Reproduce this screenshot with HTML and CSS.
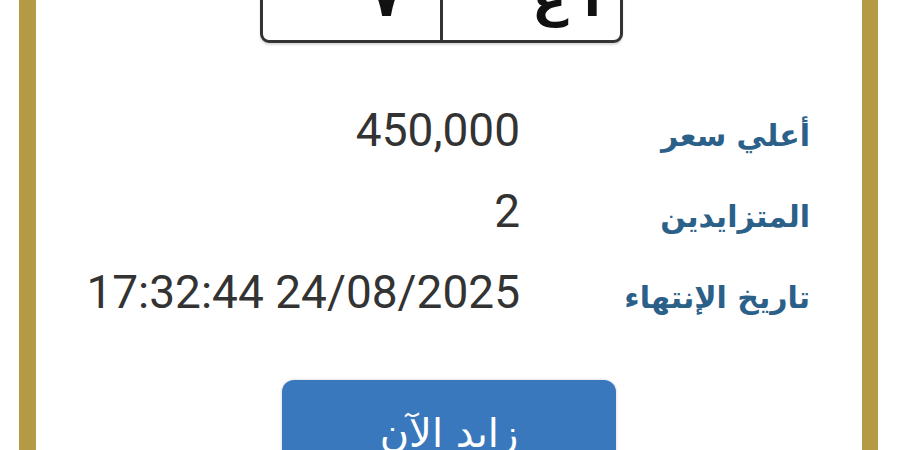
FILE: index.html
```html
<!DOCTYPE html>
<html lang="ar">
<head>
<meta charset="utf-8">
<link rel="stylesheet" href="styles.css">
</head>
<body>
<div class="frame">
  <div class="plate">
    <div class="cell cell-num">٧</div>
    <div class="cell cell-letters">أ ع</div>
  </div>
  <div class="info" dir="rtl">
    <div class="label">أعلي سعر</div>
    <div class="value">450,000</div>
    <div class="label">المتزايدين</div>
    <div class="value">2</div>
    <div class="label">تاريخ الإنتهاء</div>
    <div class="value" dir="ltr">17:32:44 24/08/2025</div>
  </div>
  <div class="actions">
    <button class="bid">زايد الآن</button>
  </div>
</div>
</body>
</html>
```

FILE: styles.css
```css
html, body {
  margin: 0;
  padding: 0;
  background: #ffffff;
}
body {
  width: 900px;
  height: 450px;
  overflow: hidden;
  font-family: "DejaVu Sans", sans-serif;
}
.frame {
  margin: 0 22px 0 19px;
  height: 450px;
  border-left: 17px solid #b59a45;
  border-right: 16px solid #b59a45;
  background: #fff;
  display: flex;
  flex-direction: column;
  overflow: hidden;
}
.frame > * {
  flex-shrink: 0;
}
.plate {
  align-self: flex-start;
  margin-left: 224px;
  margin-top: -45px;
  width: 357px;
  height: 82px;
  border: 3px solid #333;
  border-radius: 9px;
  display: flex;
  box-shadow: 0 2px 2px rgba(0,0,0,0.15);
}
.cell {
  flex: 1;
  display: flex;
  align-items: flex-end;
  justify-content: center;
  font-family: "DejaVu Sans", sans-serif;
  font-weight: bold;
  font-size: 50px;
  line-height: 1;
  color: #111;
  padding: 0 0 16px 70px;
}
.cell-num {
  border-right: 3px solid #333;
}
.cell-letters {
  direction: rtl;
}
.info {
  margin-top: 47px;
  display: grid;
  grid-template-columns: 290px 1fr;
  align-items: baseline;
  padding-right: 52px;
}
.label {
  font-family: "DejaVu Sans", sans-serif;
  font-weight: bold;
  font-size: 30px;
  line-height: 30px;
  color: #2b6089;
  text-align: right;
}
.value {
  font-family: Roboto, "Liberation Sans", sans-serif;
  font-size: 46px;
  line-height: 81px;
  color: #333;
  text-align: right;
}
.actions {
  display: flex;
  justify-content: center;
  margin-top: 47px;
}
.bid {
  width: 334px;
  height: 90px;
  border: none;
  border-radius: 12px;
  background: #3a78bd;
  color: #fff;
  font-family: "DejaVu Sans", sans-serif;
  font-weight: normal;
  font-size: 40px;
  padding: 30px 0 0;
  display: flex;
  justify-content: center;
  align-items: flex-start;
  box-shadow: 0 0 3px rgba(0,0,0,0.2);
}
```
